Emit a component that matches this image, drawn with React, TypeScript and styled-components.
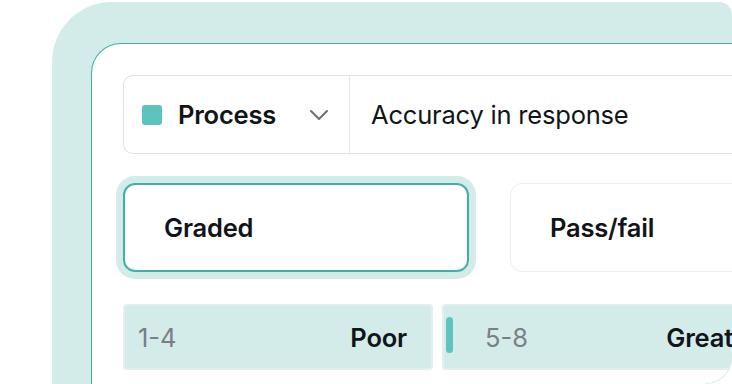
import styled, { createGlobalStyle } from "styled-components";

const Global = createGlobalStyle`
  html, body { margin: 0; padding: 0; background: #ffffff; }
  body { font-family: Inter, "Noto Sans", sans-serif; color: #111418; }
`;

const Stage = styled.div`
  width: 732px;
  height: 384px;
  overflow: hidden;
  padding: 2px 0 0 52px;
  box-sizing: border-box;
`;

const Frame = styled.div`
  position: relative;
  height: 382px;
  background: #d3ecea;
  border-radius: 60px 13px 26px 0;
  overflow: hidden;
  padding: 41px 0 0 39px;
  box-sizing: border-box;

  &::after {
    content: "";
    position: absolute;
    right: 0;
    bottom: 0;
    width: 27px;
    height: 27px;
    border-bottom-right-radius: 26px;
    border-right: 1px solid #e3e9ea;
    border-bottom: 1px solid #e3e9ea;
    box-sizing: border-box;
    pointer-events: none;
  }
`;

const Panel = styled.div`
  width: 720px;
  height: 400px;
  background: #ffffff;
  border: 1.5px solid #3fb0a8;
  border-right: none;
  border-bottom: none;
  border-radius: 30px 0 0 0;
  padding: 31px 0 0 31px;
  box-sizing: border-box;
  display: flex;
  flex-direction: column;
`;

const FieldRow = styled.div`
  display: flex;
  width: 720px;
  height: 79px;
  border: 1.5px solid #dfe2e6;
  border-right: none;
  border-radius: 10px 0 0 10px;
  box-sizing: border-box;
`;

const Select = styled.div`
  display: flex;
  align-items: center;
  width: 226px;
  padding: 0 20px 0 18px;
  border-right: 1.5px solid #e3e6ea;
  box-sizing: border-box;
  gap: 16px;
`;

const Swatch = styled.span`
  width: 20px;
  height: 20px;
  border-radius: 3px;
  background: #5ec2bd;
  flex: none;
`;

const Label = styled.span`
  font-size: 25.5px;
  font-weight: 600;
  letter-spacing: -0.2px;
  flex: 1;
`;

const Value = styled.div`
  display: flex;
  align-items: center;
  padding-left: 21px;
  font-size: 25.5px;
  letter-spacing: -0.2px;
`;

const ModeRow = styled.div`
  display: flex;
  gap: 41px;
  margin-top: 29px;
`;

const ModeCard = styled.div<{ $active?: boolean }>`
  width: 346px;
  height: 89px;
  flex: none;
  display: flex;
  align-items: center;
  padding-left: 39px;
  box-sizing: border-box;
  border-radius: 12px;
  border: ${(p) => (p.$active ? "2px solid #3fb0a8" : "1.5px solid #e8edf0")};
  box-shadow: ${(p) => (p.$active ? "0 0 0 7px #d3ecea" : "none")};
  font-size: 25.5px;
  font-weight: 600;
  letter-spacing: -0.2px;
`;

const ScaleRow = styled.div`
  display: flex;
  gap: 9px;
  margin-top: 32px;
`;

const Band = styled.div<{ $width: number }>`
  position: relative;
  width: ${(p) => p.$width}px;
  height: 66px;
  flex: none;
  display: flex;
  align-items: center;
  justify-content: space-between;
  padding: 0 24px 0 13px;
  box-sizing: border-box;
  background: #d3ecea;
  border: 2px solid #e4eeee;
  border-radius: 4px;
  font-size: 25.5px;
`;

const Range = styled.span<{ $indent?: boolean }>`
  color: #7b7e85;
  padding-left: ${(p) => (p.$indent ? "28px" : "0")};
`;

const Name = styled.span`
  font-weight: 600;
  letter-spacing: -0.2px;
`;

const Handle = styled.span`
  position: absolute;
  left: 2px;
  top: 11px;
  width: 7px;
  height: 36px;
  border-radius: 4px;
  background: #5ec2bd;
`;

const Chevron = () => (
  <svg width="20" height="12" viewBox="0 0 20 12" fill="none">
    <path d="M2 2l8 8 8-8" stroke="#6b6f78" strokeWidth="2" strokeLinecap="round" strokeLinejoin="round" />
  </svg>
);

const bands = [
  { range: "1-4", name: "Poor", handle: false, width: 310 },
  { range: "5-8", name: "Great", handle: true, width: 317 },
];

export default function App() {
  return (
    <>
      <Global />
      <Stage>
        <Frame>
          <Panel>
            <FieldRow>
              <Select>
                <Swatch />
                <Label>Process</Label>
                <Chevron />
              </Select>
              <Value>Accuracy in response</Value>
            </FieldRow>
            <ModeRow>
              <ModeCard $active>Graded</ModeCard>
              <ModeCard>Pass/fail</ModeCard>
            </ModeRow>
            <ScaleRow>
              {bands.map((b) => (
                <Band key={b.range} $width={b.width}>
                  {b.handle && <Handle />}
                  <Range $indent={b.handle}>{b.range}</Range>
                  <Name>{b.name}</Name>
                </Band>
              ))}
            </ScaleRow>
          </Panel>
        </Frame>
      </Stage>
    </>
  );
}
